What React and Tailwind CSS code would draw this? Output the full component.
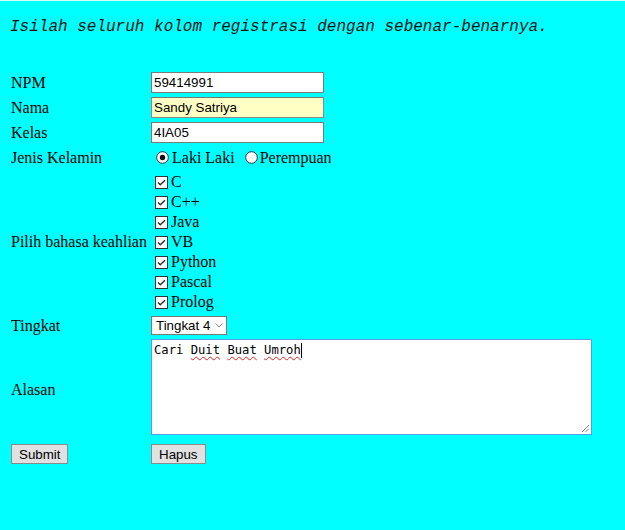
import React from 'react';

function Radio({ checked }) {
  return (
    <svg width="13" height="13" viewBox="0 0 13 13" className="shrink-0">
      <circle cx="6.5" cy="6.5" r="5.8" fill="#fff" stroke="#333" strokeWidth="1" />
      {checked && <circle cx="6.5" cy="6.5" r="2.7" fill="#111" />}
    </svg>
  );
}

function Check() {
  return (
    <svg width="13" height="13" viewBox="0 0 13 13" className="shrink-0">
      <rect x="0.5" y="0.5" width="12" height="12" fill="#fff" stroke="#333" strokeWidth="1" />
      <polyline points="3,6.5 5.3,8.8 10,4.2" fill="none" stroke="#333" strokeWidth="1.5" />
    </svg>
  );
}

function Row({ label, className = '', labelClass = '', children }) {
  return (
    <div className={`flex items-center ${className}`}>
      <div className={`w-[140px] shrink-0 text-[16px] leading-[18px] ${labelClass}`}>{label}</div>
      <div className="flex-1">{children}</div>
    </div>
  );
}

const languages = ['C', 'C++', 'Java', 'VB', 'Python', 'Pascal', 'Prolog'];

export default function App() {
  const field = "font-['Liberation_Sans'] text-[13.33px] text-black";
  const spell = 'underline decoration-wavy decoration-[#e02020] underline-offset-[2px] decoration-[1px]';

  return (
    <div className="min-h-screen bg-[#00ffff] border-t border-[#dcfafa] font-['Liberation_Serif',serif] text-black">
      <p className="pl-[10px] pt-[17px] font-['Liberation_Mono',monospace] italic text-[16px] leading-[18px] text-[#111]">
        Isilah seluruh kolom registrasi dengan sebenar-benarnya.
      </p>

      <div className="mt-[35px] pl-[11px] flex flex-col gap-[2px]">
        <Row label="NPM" className="h-[23px]">
          <div className={`w-[173px] h-[21px] bg-white border border-[#7a7a7a] px-[2px] flex items-center ${field}`}>59414991</div>
        </Row>
        <Row label="Nama" className="h-[23px]">
          <div className={`w-[173px] h-[21px] bg-[#ffffc4] border border-[#8a8a8a] border-t-[#777] px-[2px] flex items-center ${field}`}>Sandy Satriya</div>
        </Row>
        <Row label="Kelas" className="h-[23px]">
          <div className={`w-[173px] h-[21px] bg-white border border-[#7a7a7a] px-[2px] flex items-center ${field}`}>4IA05</div>
        </Row>
        <Row label="Jenis Kelamin" className="h-[23px]">
          <div className="flex items-center text-[16px] leading-[18px]">
            <span className="ml-[5px]"><Radio checked /></span>
            <span className="ml-[3px]">Laki Laki</span>
            <span className="ml-[10px]"><Radio /></span>
            <span className="ml-[2px]">Perempuan</span>
          </div>
        </Row>
        <Row label="Pilih bahasa keahlian" className="h-[142px]">
          <div className="flex flex-col py-[1px]">
            {languages.map((l) => (
              <div key={l} className="h-[20px] flex items-center text-[16px] leading-[18px]">
                <span className="ml-[4px]"><Check /></span>
                <span className="ml-[3px]">{l}</span>
              </div>
            ))}
          </div>
        </Row>
        <Row label="Tingkat" className="h-[21px]">
          <div className={`w-[76px] h-[19px] bg-white border border-[#7a7a7a] pl-[4px] pr-[3px] flex items-center justify-between ${field}`}>
            <span>Tingkat 4</span>
            <svg width="8" height="5" viewBox="0 0 8 5">
              <polyline points="0.5,0.5 4,4 7.5,0.5" fill="none" stroke="#888" strokeWidth="1" />
            </svg>
          </div>
        </Row>
        <Row label="Alasan" className="h-[98px]" labelClass="pt-[5px]">
          <div className="relative w-[441px] h-[96px] bg-white border border-[#569de5] px-[2px] pt-[3px] font-['DejaVu_Sans_Mono',monospace] text-[12.2px] leading-[15px] text-black">
            <span>Cari </span>
            <span className={spell}>Duit</span>
            <span> </span>
            <span className={spell}>Buat</span>
            <span> </span>
            <span className={spell}>Umroh</span>
            <span className="inline-block w-px h-[15px] bg-black align-top" />
            <svg className="absolute right-[1px] bottom-[1px]" width="9" height="9" viewBox="0 0 9 9">
              <line x1="1" y1="8" x2="8" y2="1" stroke="#888" strokeWidth="1" />
              <line x1="4.5" y1="8" x2="8" y2="4.5" stroke="#888" strokeWidth="1" />
            </svg>
          </div>
        </Row>
        <div className="flex items-center mt-[4px]">
          <div className="w-[140px] shrink-0">
            <button className={`h-[20px] px-[7px] bg-[#e1e1e1] border border-[#8a8a8a] ${field}`}>Submit</button>
          </div>
          <button className={`h-[20px] px-[7px] bg-[#e1e1e1] border border-[#8a8a8a] ${field}`}>Hapus</button>
        </div>
      </div>
    </div>
  );
}
